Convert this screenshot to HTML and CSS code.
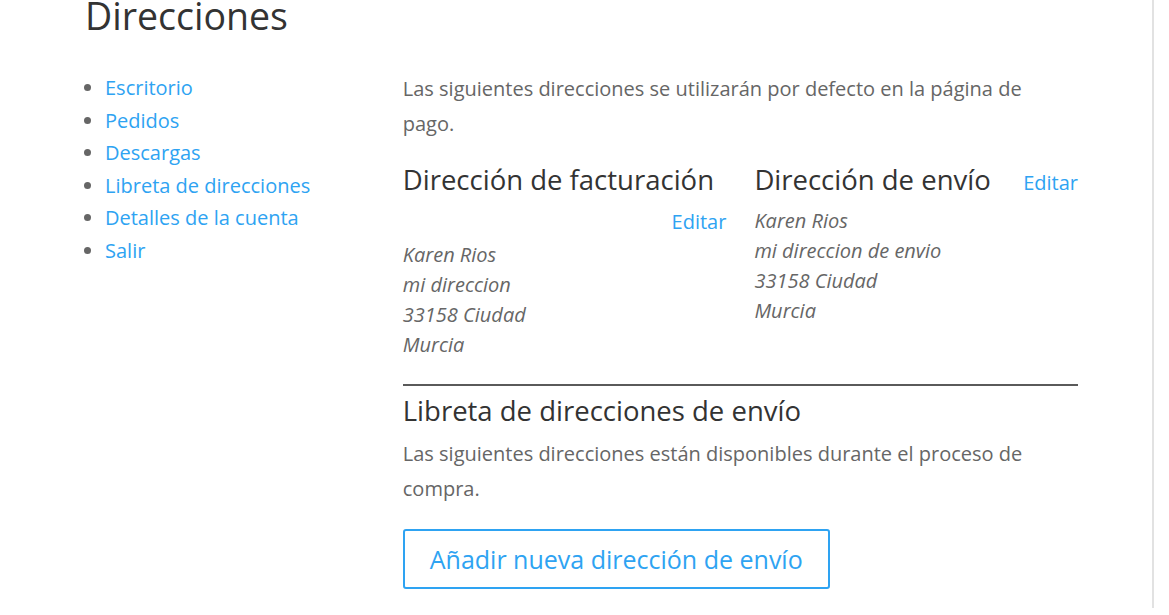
FILE: index.html
```html
<!DOCTYPE html>
<html lang="es">
<head>
  <meta charset="UTF-8" />
  <meta name="viewport" content="width=device-width,initial-scale=1.0" />
  <title>Direcciones</title>
  <link rel="stylesheet" href="styles.css">
</head>
<body>
  <div class="page">
    <main class="container">
      <h1 class="page-title">Direcciones</h1>

      <div class="account">
        <nav class="account-nav">
          <ul>
            <li><a href="#">Escritorio</a></li>
            <li><a href="#">Pedidos</a></li>
            <li><a href="#">Descargas</a></li>
            <li><a href="#">Libreta de direcciones</a></li>
            <li><a href="#">Detalles de la cuenta</a></li>
            <li><a href="#">Salir</a></li>
          </ul>
        </nav>

        <div class="account-content">
          <p>Las siguientes direcciones se utilizarán por defecto en la página de pago.</p>

          <div class="addresses">
            <div class="address">
              <header class="address-title">
                <h3>Dirección de facturación</h3>
                <a href="#" class="edit">Editar</a>
              </header>
              <address>
                Karen Rios<br>
                mi direccion<br>
                33158 Ciudad<br>
                Murcia
              </address>
            </div>

            <div class="address">
              <header class="address-title">
                <h3>Dirección de envío</h3>
                <a href="#" class="edit">Editar</a>
              </header>
              <address>
                Karen Rios<br>
                mi direccion de envio<br>
                33158 Ciudad<br>
                Murcia
              </address>
            </div>
          </div>

          <hr>

          <h3 class="book-title">Libreta de direcciones de envío</h3>
          <p>Las siguientes direcciones están disponibles durante el proceso de compra.</p>

          <a href="#" class="button">Añadir nueva dirección de envío</a>
        </div>
      </div>
    </main>
  </div>
</body>
</html>
```

FILE: styles.css
```css
* { margin: 0; padding: 0; box-sizing: border-box; }
html, body { height: 100%; }
body {
  font-family: "Open Sans", Arial, sans-serif;
  font-size: 20px;
  color: #666;
  background: #fff;
  line-height: 1.75;
  overflow: hidden;
}
a { color: #2ea3f2; text-decoration: none; }

.page {
  min-height: 100%;
  width: 1154px;
  border-right: 2px solid #e2e2e2;
  background: linear-gradient(#f2f2f2, #fff 4px);
}
.container {
  width: 993px;
  margin-left: 85px;
}
.page-title {
  font-size: 37.5px;
  font-weight: 400;
  color: #333;
  line-height: 45px;
  margin-top: -7px;
  margin-bottom: 33px;
}

.account {
  display: grid;
  grid-template-columns: 30% 68%;
  justify-content: space-between;
}
.account-nav ul {
  padding-left: 20px;
  padding-top: 1px;
  line-height: 32.5px;
  color: #666;
}

.account-content p { line-height: 35px; }
.addresses {
  display: grid;
  grid-template-columns: 1fr 1fr;
  gap: 28px;
  margin-top: 13px;
}
.address-title {
  display: flex;
  flex-wrap: wrap;
  align-items: baseline;
  justify-content: space-between;
}
.address-title h3 {
  font-size: 27.5px;
  font-weight: 400;
  color: #333;
  line-height: 52px;
}
.address-title .edit {
  margin-left: auto;
  line-height: 32px;
  padding-bottom: 2px;
}
address {
  font-style: italic;
  line-height: 30px;
}

hr {
  border: 0;
  border-top: 2px solid #5a5a5a;
  margin-top: 24px;
}
.book-title {
  font-size: 27.5px;
  font-weight: 400;
  color: #333;
  line-height: 40px;
  margin-top: 5px;
  margin-bottom: 5px;
}

.button {
  display: inline-block;
  margin-top: 23px;
  border: 2px solid #2ea3f2;
  border-radius: 3px;
  padding: 0 25px;
  font-size: 25px;
  line-height: 56px;
}
```
